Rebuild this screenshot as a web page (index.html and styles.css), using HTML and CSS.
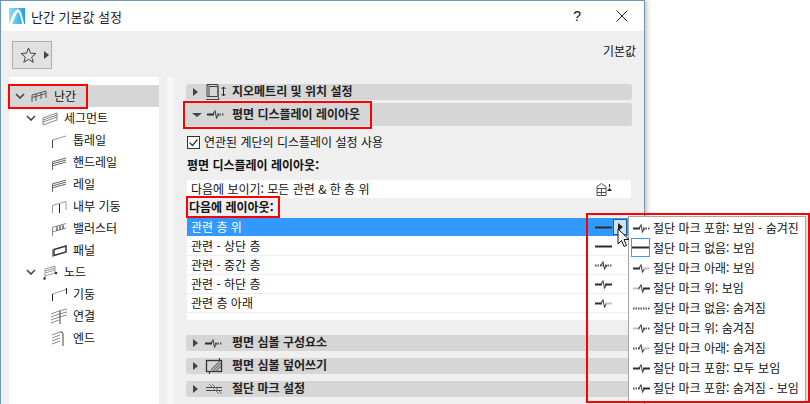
FILE: index.html
```html
<!DOCTYPE html>
<html lang="ko">
<head>
<meta charset="utf-8">
<title>난간 기본값 설정</title>
<link rel="stylesheet" href="styles.css">
</head>
<body>
<svg class="defs" width="0" height="0">
  <defs>
    <linearGradient id="lg" x1="0" y1="0" x2="1" y2="0"><stop offset="0" stop-color="#8fe0f8"/><stop offset="1" stop-color="#1b9fe0"/></linearGradient>
    <symbol id="l-full" viewBox="0 0 17 9"><path d="M0 4.500h17" stroke="#2d2d2d" stroke-width="2"/></symbol>
    <symbol id="brk" viewBox="0 0 17 9"><path d="M5.500 5l2.500-4 1.500 7 2.500-4" fill="none" stroke="#444" stroke-width="1.100"/></symbol>
    <symbol id="l-ld" viewBox="0 0 17 9"><path d="M0 4.500h7" stroke="#2d2d2d" stroke-width="2"/></symbol>
    <symbol id="l-rd" viewBox="0 0 17 9"><path d="M10 4.500h7" stroke="#2d2d2d" stroke-width="2"/></symbol>
    <symbol id="l-lg" viewBox="0 0 17 9"><path d="M0 4.500h7" stroke="#c4c4c4" stroke-width="2"/></symbol>
    <symbol id="l-rg" viewBox="0 0 17 9"><path d="M10 4.500h7" stroke="#c4c4c4" stroke-width="2"/></symbol>
    <symbol id="l-lo" viewBox="0 0 17 9"><path d="M0 4.500h7" stroke="#555" stroke-width="2" stroke-dasharray="1.500 1"/></symbol>
    <symbol id="l-ro" viewBox="0 0 17 9"><path d="M10 4.500h7" stroke="#555" stroke-width="2" stroke-dasharray="1.500 1"/></symbol>
    <symbol id="l-dots" viewBox="0 0 17 9"><path d="M0 4.500h17" stroke="#555" stroke-width="2" stroke-dasharray="1.500 1"/></symbol>
    <symbol id="rail" viewBox="0 0 16 16"><path d="M1.500 8L15 4" fill="none" stroke="#999"/><path d="M1.500 16V8" stroke="#444"/></symbol>
    <symbol id="hatch" viewBox="0 0 16 16"><path d="M1 8L15 4M1 10L15 6M1 12L15 8" fill="none" stroke="#666"/><path d="M1.500 16V8" stroke="#666"/></symbol>
  </defs>
</svg>

<div class="window">
  <header class="titlebar">
    <svg class="logo" width="16" height="16" viewBox="0 0 16 16"><rect width="16" height="16" fill="url(#lg)"/><path d="M0 16C3 9 5 2 9 1c3 1 5 9 6 15h-2C12 11 11 5 9 4 7 6 5 12 3 16z" fill="#fff"/></svg>
    <span class="title">난간 기본값 설정</span>
    <span class="help">?</span>
    <svg class="close" width="12" height="12" viewBox="0 0 12 12"><path d="M0.500 0.500l11 11M11.500 0.500l-11 11" stroke="#222" fill="none"/></svg>
  </header>

  <div class="toolbar">
    <button class="fav">
      <svg width="17" height="16" viewBox="0 0 17 16"><path d="M8.500 1l2 5.200 5.500.3-4.300 3.500 1.500 5.300-4.700-3-4.700 3 1.500-5.300L1 6.500l5.500-.3z" fill="none" stroke="#444"/></svg>
      <i class="tri-r"></i>
    </button>
    <span class="defaults">기본값</span>
  </div>

  <div class="main">
    <nav class="tree">
      <div class="node sel">
        <svg class="chev" width="10" height="6" viewBox="0 0 10 6"><path d="M1 1l4 4 4-4" fill="none" stroke="#444" stroke-width="1.600"/></svg>
        <svg class="ti" width="16" height="12" viewBox="0 0 16 12"><path d="M1 12V5L15 1M1 7.500L15 3.500M5 11V4M10 9V3M15 8V1" fill="none" stroke="#555"/></svg>
        <span>난간</span>
      </div>
      <div class="node lv1">
        <svg class="chev" width="10" height="6" viewBox="0 0 10 6"><path d="M1 1l4 4 4-4" fill="none" stroke="#444" stroke-width="1.600"/></svg>
        <svg class="ti" width="16" height="16" viewBox="0 0 16 16"><path d="M1 8L15 3V10L1 15zM1 10L15 5M1 12L15 7" fill="none" stroke="#888"/></svg>
        <span>세그먼트</span>
      </div>
      <div class="node lv2"><svg class="ti" width="16" height="16"><use href="#rail"/></svg><span>톱레일</span></div>
      <div class="node lv2"><svg class="ti" width="16" height="16"><use href="#hatch"/></svg><span>핸드레일</span></div>
      <div class="node lv2"><svg class="ti" width="16" height="16"><use href="#hatch"/></svg><span>레일</span></div>
      <div class="node lv2"><svg class="ti" width="16" height="16" viewBox="0 0 16 16"><path d="M1.500 15V7.500L15 3.500V12" fill="none" stroke="#999"/><path d="M8.500 6V15" stroke="#222"/></svg><span>내부 기둥</span></div>
      <div class="node lv2"><svg class="ti" width="16" height="16" viewBox="0 0 16 16"><path d="M1 7.500L15 3.500M1 12L15 8M1.500 16V7.500" fill="none" stroke="#888"/><path d="M6 11V6.500M9 10V5.500M12 9V5" stroke="#222"/></svg><span>밸러스터</span></div>
      <div class="node lv2"><svg class="ti" width="16" height="16" viewBox="0 0 16 16"><path d="M1.500 15V7.500" stroke="#888"/><path d="M3 7.500L15 4V10L3 13.500z" fill="none" stroke="#333" stroke-width="1.500"/></svg><span>패널</span></div>
      <div class="node lv1">
        <svg class="chev" width="10" height="6" viewBox="0 0 10 6"><path d="M1 1l4 4 4-4" fill="none" stroke="#444" stroke-width="1.600"/></svg>
        <svg class="ti" width="16" height="16" viewBox="0 0 16 16"><path d="M3 14V5L13 2V9L3 12M3 7L13 4M3 9L13 6" fill="none" stroke="#999"/><circle cx="2.500" cy="14.500" r="1.300" fill="#333"/><circle cx="14" cy="9" r="1.300" fill="#333"/></svg>
        <span>노드</span>
      </div>
      <div class="node lv2"><svg class="ti" width="16" height="16" viewBox="0 0 16 16"><path d="M1.500 8L15 3.500" fill="none" stroke="#999"/><path d="M1.500 15V8M15.500 8V2" stroke="#222"/></svg><span>기둥</span></div>
      <div class="node lv2"><svg class="ti" width="16" height="16" viewBox="0 0 16 16"><path d="M0 6L8 3L16 1M0 9L8 6L16 4M0 12L8 9L16 7M0 15L8 12" fill="none" stroke="#888"/><path d="M9 3V16" stroke="#444"/></svg><span>연결</span></div>
      <div class="node lv2"><svg class="ti" width="16" height="16" viewBox="0 0 16 16"><path d="M1 5L9 2M1 8L9 5M1 11L9 8M1 14L9 11" fill="none" stroke="#888"/><path d="M9 2Q12 1 12 4V16" fill="none" stroke="#444"/></svg><span>엔드</span></div>
    </nav>
    <div class="divider"></div>

    <section class="content">
      <div class="bar bar-thin">
        <i class="tri-r"></i>
        <svg class="bi" width="22" height="18" viewBox="0 0 22 18"><path d="M2 1.500h11v12H2zM2 3.500l2-2M4 1.500h9M4 3.500h9v10M4 3.500v10M1 16.500h13l-1-3" fill="none" stroke="#444"/><path d="M18.500 4v9M16.500 6l2-2 2 2M16.500 11l2 2 2-2" fill="none" stroke="#222"/></svg>
        <b class="bt">지오메트리 및 위치 설정</b>
      </div>
      <div class="bar bar-open">
        <i class="tri-d"></i>
        <svg class="bi" width="22" height="9"><use href="#brk" width="17" height="9"/><use href="#l-ld" width="17" height="9"/><use href="#l-ro" width="17" height="9"/></svg>
        <b class="bt">평면 디스플레이 레이아웃</b>
      </div>

      <label class="check">
        <svg width="13" height="13" viewBox="0 0 13 13"><rect x=".5" y=".5" width="12" height="12" fill="#fff" stroke="#333"/><path d="M2.500 6.500l3 3 5-6" fill="none" stroke="#333" stroke-width="1.300"/></svg>
        <span>연관된 계단의 디스플레이 설정 사용</span>
      </label>
      <div class="lbl lbl1">평면 디스플레이 레이아웃:</div>
      <div class="show">
        <span>다음에 보이기: 모든 관련 &amp; 한 층 위</span>
        <svg width="16" height="13" viewBox="0 0 16 13"><path d="M1 3.500L5.500 .5 10 3.500M1 5.500h9M1 9.500h9M1 3.500v9h9v-9M5.500 5v7" fill="none" stroke="#555"/><path d="M13 1h1v3h-1zM11 8l2.500-3 2.500 3z" fill="#222"/></svg>
      </div>
      <div class="lbl lbl2">다음에 레이아웃:</div>

      <div class="list">
        <div class="row on">
          <span>관련 층 위</span>
          <svg class="ri" width="17" height="9"><use href="#l-full"/></svg>
          <button class="pick"><i class="tri-r"></i></button>
        </div>
        <div class="row"><span>관련 - 상단 층</span><svg class="ri" width="17" height="9"><use href="#l-full"/></svg></div>
        <div class="row"><span>관련 - 중간 층</span><svg class="ri" width="17" height="9"><use href="#l-dots"/><use href="#brk"/></svg></div>
        <div class="row"><span>관련 - 하단 층</span><svg class="ri" width="17" height="9"><use href="#l-ld"/><use href="#brk"/><use href="#l-rd"/></svg></div>
        <div class="row"><span>관련 층 아래</span><svg class="ri" width="17" height="9"><use href="#l-ld"/><use href="#brk"/><use href="#l-rg"/></svg></div>
        <div class="row-end"></div>
      </div>

      <div class="bar first-closed">
        <i class="tri-r"></i>
        <svg class="bi" width="22" height="9"><use href="#brk" width="17" height="9"/><use href="#l-ld" width="17" height="9"/><use href="#l-ro" width="17" height="9"/></svg>
        <b class="bt">평면 심볼 구성요소</b>
      </div>
      <div class="bar">
        <i class="tri-r"></i>
        <svg class="bi" width="22" height="18" viewBox="0 0 22 18"><rect x="1.500" y="3.500" width="15" height="11" fill="none" stroke="#333" stroke-width="1.300"/><path d="M8 14L16 6M11 14L16 9M6 13L15 4" stroke="#777" stroke-width="1.300"/><path d="M14.500 1v3M4.500 14v3" stroke="#333"/></svg>
        <b class="bt">평면 심볼 덮어쓰기</b>
      </div>
      <div class="bar">
        <i class="tri-r"></i>
        <svg class="bi" width="22" height="12" viewBox="0 0 22 12"><path d="M1 4.500h16M1 7.500h16" stroke="#444"/><path d="M4 1l10 10M7 1l10 10" stroke="#777"/></svg>
        <b class="bt">절단 마크 설정</b>
      </div>
    </section>
  </div>
</div>

<ul class="menu">
  <li><svg width="17" height="9"><use href="#l-ld"/><use href="#brk"/><use href="#l-ro"/></svg><span>절단 마크 포함: 보임 - 숨겨진</span></li>
  <li class="cur"><svg width="19" height="19"><rect x=".5" y=".5" width="18" height="18" fill="none" stroke="#3f9bf0"/><use href="#l-full" x="1" y="5" width="17" height="9"/></svg><span>절단 마크 없음: 보임</span></li>
  <li><svg width="17" height="9"><use href="#l-ld"/><use href="#brk"/><use href="#l-rg"/></svg><span>절단 마크 아래: 보임</span></li>
  <li><svg width="17" height="9"><use href="#l-lg"/><use href="#brk"/><use href="#l-rd"/></svg><span>절단 마크 위: 보임</span></li>
  <li><svg width="17" height="9"><use href="#l-dots"/></svg><span>절단 마크 없음: 숨겨짐</span></li>
  <li><svg width="17" height="9"><use href="#l-lg"/><use href="#brk"/><use href="#l-ro"/></svg><span>절단 마크 위: 숨겨짐</span></li>
  <li><svg width="17" height="9"><use href="#l-lo"/><use href="#brk"/><use href="#l-rg"/></svg><span>절단 마크 아래: 숨겨짐</span></li>
  <li><svg width="17" height="9"><use href="#l-ld"/><use href="#brk"/><use href="#l-rd"/></svg><span>절단 마크 포함: 모두 보임</span></li>
  <li><svg width="17" height="9"><use href="#l-lo"/><use href="#brk"/><use href="#l-rd"/></svg><span>절단 마크 포함: 숨겨짐 - 보임</span></li>
</ul>

<svg class="cursor" width="13" height="20" viewBox="0 0 13 20"><path d="M1 1v15l3.500-3.500 2.500 6 2.500-1-2.500-6h5z" fill="#fff" stroke="#111"/></svg>

<div class="mark m-tree"></div>
<div class="mark m-bar"></div>
<div class="mark m-lbl"></div>
<div class="mark m-menu"></div>
</body>
</html>
```
FILE: styles.css
```css
* { box-sizing: border-box; }
html, body { margin: 0; padding: 0; }
body {
  position: relative;
  width: 810px;
  height: 404px;
  overflow: hidden;
  background: #fff;
  font-family: "Noto Sans CJK KR", "Noto Sans", sans-serif;
  font-size: 12px;
  color: #111;
}
.defs { position: absolute; }
i { display: block; flex: none; }
b { font-weight: 700; }

.tri-r { width: 0; height: 0; border-left: 5px solid #444; border-top: 4px solid transparent; border-bottom: 4px solid transparent; }
.tri-d { width: 0; height: 0; border-top: 4px solid #444; border-left: 5px solid transparent; border-right: 5px solid transparent; }

.window {
  width: 645px;
  height: 404px;
  display: flex;
  flex-direction: column;
  background: #efefef;
  border: 1px solid #6d93b5;
  border-bottom: 0;
  box-shadow: 2px 0 5px rgba(0, 0, 0, .25);
}
.titlebar {
  flex: none;
  height: 30px;
  display: flex;
  align-items: center;
  background: #fff;
  padding: 0 16px 0 8px;
}
.logo { margin-right: 6px; }
.title { font-size: 13px; color: #222; }
.help { margin-left: auto; margin-right: 35px; font-size: 14px; font-family: "Liberation Sans", sans-serif; }

.toolbar {
  flex: none;
  height: 46px;
  display: flex;
  align-items: flex-start;
  justify-content: space-between;
  padding: 10px 8px 0 11px;
}
.fav {
  width: 40px;
  height: 28px;
  display: flex;
  align-items: center;
  gap: 7px;
  padding: 0 0 0 7px;
  background: #e1e1e1;
  border: 1px solid #adadad;
}
.defaults { margin-top: 2px; font-size: 12px; line-height: 16px; }

.main { flex: 1; display: flex; min-height: 0; }
.tree {
  flex: none;
  width: 150px;
  margin-left: 8px;
  padding-top: 8px;
  background: #fff;
}
.node { height: 22px; display: flex; align-items: center; white-space: nowrap; }
.node span { margin-top: -2px; }
.node .chev { margin-right: 6px; flex: none; }
.node .ti { flex: none; margin-right: 6px; }
.sel { background: #d6d6d6; padding-left: 6px; }
.sel .ti { margin-right: 7px; }
.lv1 { padding-left: 17px; }
.lv2 { padding-left: 42px; }
.divider { flex: none; width: 7px; margin-left: 8px; background: #f6f6f6; }

.content { flex: none; width: 446px; margin-left: 12px; padding-top: 7px; }
.bar {
  height: 16px;
  display: flex;
  align-items: center;
  margin-bottom: 7px;
  padding-left: 7px;
  background: #d6d6d6;
  border-radius: 3px;
}
.bar-thin { margin-bottom: 3px; }
.bar-open { height: 23px; margin-bottom: 0; padding-left: 6px; }
.bar .bi { flex: none; margin-left: 7px; margin-right: 5px; }
.bar-open .bi { margin-left: 5px; margin-right: 3px; }
.bt { font-size: 12px; line-height: 16px; color: #222; margin-top: -2px; }

.check { display: flex; align-items: center; gap: 4px; height: 16px; margin: 8px 0 0 1px; }
.check span { margin-top: -2px; }
.lbl { height: 16px; line-height: 16px; font-weight: 700; padding-left: 1px; }
.lbl1 { margin-top: 7px; }
.lbl2 { margin-top: 1px; padding-left: 3px; }
.show {
  height: 18px;
  margin: 7px 1px 0;
  padding: 0 19px 0 4px;
  display: flex;
  align-items: center;
  justify-content: space-between;
  background: #fff;
}
.show span { margin-top: -2px; }
.list { margin: 3px 1px 0; background: #fff; }
.row {
  height: 19px;
  display: flex;
  align-items: center;
  padding: 0 19px 0 4px;
  border-bottom: 1px solid #eee;
}
.row span { flex: 1; margin-top: -2px; }
.row.on { height: 18px; margin-bottom: 1px; border: 0; padding-right: 4px; background: #3399ff; color: #fff; }
.row.on .ri { margin-right: 1px; }
.pick {
  width: 14px;
  height: 16px;
  padding: 0 0 0 4px;
  display: flex;
  align-items: center;
  background: #cde4f7;
  border: 1px solid #1f5f9f;
}
.pick .tri-r { border-left-color: #222; }
.row-end { height: 7px; }
.first-closed { margin-top: 15px; }

.menu {
  position: absolute;
  left: 628px;
  top: 216px;
  width: 178px;
  margin: 0;
  padding: 1px 0 3px 3px;
  list-style: none;
  background: #fff;
  border: 1px solid #a5a5a5;
  box-shadow: 1px 1px 2px rgba(0, 0, 0, .2);
}
.menu li { height: 20px; display: flex; align-items: center; gap: 3px; white-space: nowrap; }
.menu li span { margin-top: -2px; }
.menu svg { flex: none; margin-left: 1px; }
.menu .cur svg { margin: -1px 0 0 -1px; }

.cursor { position: absolute; left: 617px; top: 228px; }

.mark { position: absolute; border: 2px solid #ff0000; pointer-events: none; }
.m-tree { left: 8px; top: 84px; width: 80px; height: 25px; }
.m-bar { left: 183px; top: 101px; width: 189px; height: 28px; }
.m-lbl { left: 186px; top: 196px; width: 94px; height: 22px; }
.m-menu { left: 586px; top: 213px; width: 224px; height: 190px; }
```
